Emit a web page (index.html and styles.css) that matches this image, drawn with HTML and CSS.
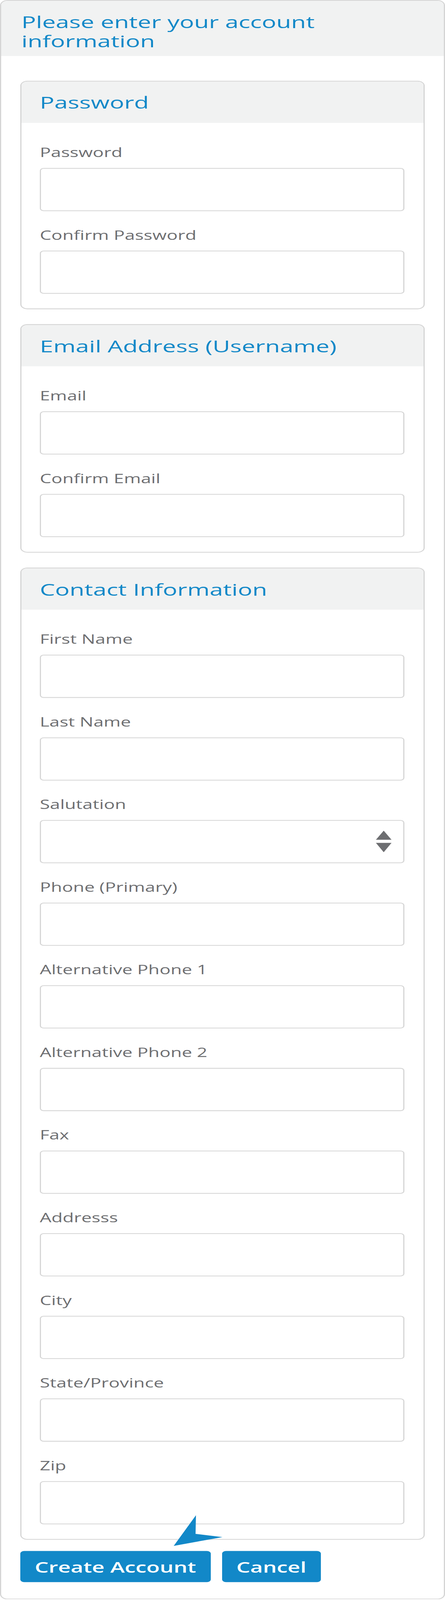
FILE: index.html
```html
<!DOCTYPE html>
<html lang="en">
<head>
    <meta charset="UTF-8">
    <meta name="viewport" content="width=device-width, initial-scale=1.0">
    <title>Create Account</title>
    <link rel="stylesheet" href="styles.css">
</head>
<body>
    <div class="stage">
    <div class="page">
        <h1 class="page-title">Please enter your account information</h1>

        <div class="page-body">
            <div class="card">
                <h2 class="card-title">Password</h2>
                <div class="card-body">
                    <div class="field">
                        <label for="password">Password</label>
                        <input type="password" id="password">
                    </div>
                    <div class="field">
                        <label for="password2">Confirm Password</label>
                        <input type="password" id="password2">
                    </div>
                </div>
            </div>

            <div class="card">
                <h2 class="card-title">Email Address (Username)</h2>
                <div class="card-body">
                    <div class="field">
                        <label for="email">Email</label>
                        <input type="email" id="email">
                    </div>
                    <div class="field">
                        <label for="email2">Confirm Email</label>
                        <input type="email" id="email2">
                    </div>
                </div>
            </div>

            <div class="card">
                <h2 class="card-title">Contact Information</h2>
                <div class="card-body">
                    <div class="field">
                        <label for="first">First Name</label>
                        <input type="text" id="first">
                    </div>
                    <div class="field">
                        <label for="last">Last Name</label>
                        <input type="text" id="last">
                    </div>
                    <div class="field">
                        <label for="salutation">Salutation</label>
                        <div class="select-wrap">
                            <select id="salutation">
                                <option value=""></option>
                            </select>
                            <svg class="select-arrows" width="40" height="81" viewBox="0 0 40 81">
                                <polygon points="20,0 40,34 0,34" fill="#6d6e71"/>
                                <polygon points="0,46 40,46 20,81" fill="#6d6e71"/>
                            </svg>
                        </div>
                    </div>
                    <div class="field">
                        <label for="phone">Phone (Primary)</label>
                        <input type="tel" id="phone">
                    </div>
                    <div class="field">
                        <label for="alt1">Alternative Phone 1</label>
                        <input type="tel" id="alt1">
                    </div>
                    <div class="field">
                        <label for="alt2">Alternative Phone 2</label>
                        <input type="tel" id="alt2">
                    </div>
                    <div class="field">
                        <label for="fax">Fax</label>
                        <input type="tel" id="fax">
                    </div>
                    <div class="field">
                        <label for="address">Addresss</label>
                        <input type="text" id="address">
                    </div>
                    <div class="field">
                        <label for="city">City</label>
                        <input type="text" id="city">
                    </div>
                    <div class="field">
                        <label for="state">State/Province</label>
                        <input type="text" id="state">
                    </div>
                    <div class="field">
                        <label for="zip">Zip</label>
                        <input type="text" id="zip">
                    </div>
                </div>
            </div>

            <div class="actions">
                <button class="btn">Create Account</button>
                <button class="btn">Cancel</button>
                <!-- mouse pointer from the screenshot -->
                <svg class="pointer" width="135" height="125" viewBox="0 0 135 125">
                    <polygon points="62,4 61,74 130,86 5,119" fill="#1288c8"/>
                </svg>
            </div>
        </div>
    </div>
    </div>

    <script>
        // The form is drawn for a 6002px tall window; squeeze it if the window is shorter
        function fitToWindow() {
            const stage = document.querySelector('.stage');
            const page = document.querySelector('.page');
            const scale = Math.min(1, window.innerHeight / 6002);

            page.style.transform = scale < 1 ? 'scaleY(' + scale + ')' : '';
            stage.style.height = Math.floor(page.offsetHeight * scale) + 'px';
        }

        fitToWindow();
        window.addEventListener('resize', fitToWindow);
    </script>
</body>
</html>
```

FILE: styles.css
```css
* {
    box-sizing: border-box;
    margin: 0;
    padding: 0;
}

body {
    font-family: "Open Sans", "Noto Sans", sans-serif;
    background: #fff;
}

.stage {
    overflow: hidden;
}

.page {
    width: 1140px;
    border: 3px solid #d5d5d5;
    border-radius: 20px;
    overflow: hidden;
    background: #fff;
    transform-origin: 0 0;
}

.page-title {
    background: #f1f2f2;
    color: #1288c8;
    font-size: 62px;
    line-height: 71px;
    font-weight: 400;
    padding: 44px 52px 21px;
}

.page-body {
    padding: 93px 49px 62px;
}

.card {
    border: 3px solid #d5d5d5;
    border-radius: 18px;
    overflow: hidden;
    margin-bottom: 56px;
}

.card-title {
    background: #f1f2f2;
    color: #1288c8;
    font-size: 62px;
    line-height: 71px;
    font-weight: 400;
    padding: 43px 47px 41px;
}

.card-body {
    padding: 79px 49px 55px 47px;
}

.field + .field {
    margin-top: 58px;
}

.field label {
    display: block;
    color: #6d6e71;
    font-size: 47px;
    line-height: 62px;
    margin-bottom: 28px;
}

.field input,
.field select {
    display: block;
    width: 100%;
    height: 162px;
    border: 3px solid #d6d6d6;
    border-radius: 10px;
    background: #fff;
    font-family: inherit;
    font-size: 47px;
    color: #333;
    padding: 0 30px;
    appearance: none;
    -webkit-appearance: none;
    outline: none;
}

.select-wrap {
    position: relative;
}

.select-arrows {
    position: absolute;
    right: 33px;
    top: 40px;
    pointer-events: none;
}

.actions {
    position: relative;
    display: flex;
    gap: 29px;
    margin-top: -14px;
}

.btn {
    height: 117px;
    padding: 0 37px;
    border: none;
    border-radius: 10px;
    background: #1288c8;
    color: #fff;
    font-family: inherit;
    font-size: 56px;
    font-weight: 600;
    cursor: pointer;
}

.pointer {
    position: absolute;
    left: 388px;
    top: -138px;
}
```
